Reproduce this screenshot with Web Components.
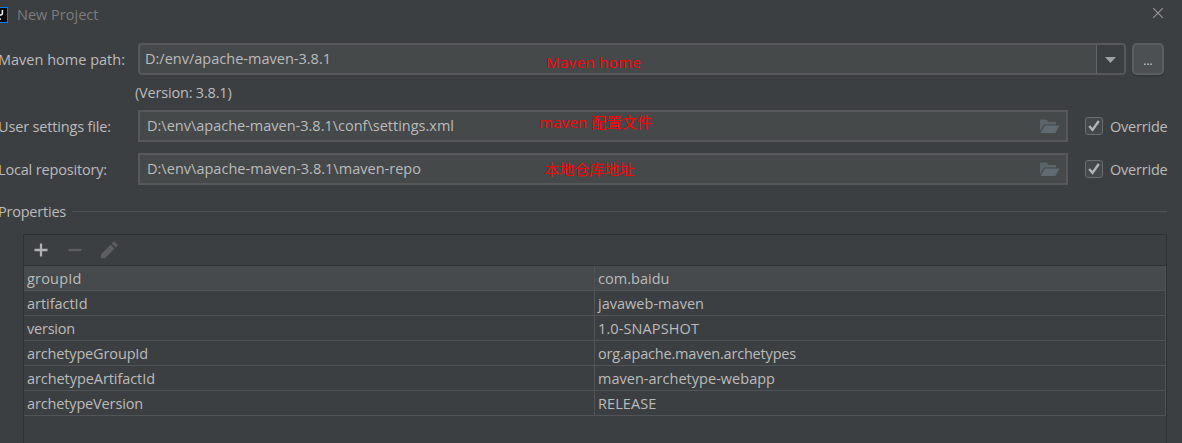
<!DOCTYPE html>
<html lang="en">
<head>
<meta charset="utf-8">
<title>New Project</title>
<style>
html,body{margin:0;height:100%;overflow:hidden;background:#3c3f41}
</style>
</head>
<body>
<new-project-dialog></new-project-dialog>
<script>
const define = (name, html, setup) => {
  const template = document.createElement('template');
  template.innerHTML = html;
  customElements.define(name, class extends HTMLElement {
    constructor() {
      super();
      this.attachShadow({mode: 'open'}).append(template.content.cloneNode(true));
    }
    connectedCallback() { if (setup) setup(this, this.shadowRoot); }
  });
};

/* One line of text whose tracking is adjusted to an advance width in px. */
define('fit-text', `<style>:host{display:inline-block;white-space:pre;flex:none}span{display:inline-block}</style><span><slot></slot></span>`, (el, root) => {
  const span = root.querySelector('span');
  const natural = span.getBoundingClientRect().width;
  const count = [...el.textContent].length;
  if (natural) span.style.letterSpacing = ((+el.getAttribute('w') - natural) / count) + 'px';
});

define('title-bar', `<style>
:host{display:flex;align-items:center;height:30px;color:#7b7d7f;box-sizing:border-box;padding-right:18px}
.logo{display:block;margin-right:9px}
.x{margin-left:auto;display:block;margin-top:-4px}
</style>
<svg class="logo" width="8" height="16" viewBox="0 0 8 16"><path fill="#087cfa" d="M0 0h8v16H0z"/><path fill="#08090b" d="M0 1h7v14H0z"/><path d="M2.4 3v3.600Q2.400 8 1 8H0" fill="none" stroke="#fff" stroke-width="1.500"/><path fill="#fff" d="M0 11.500h1v1.300H0z"/></svg>
<slot></slot>
<svg class="x" width="12" height="12" viewBox="0 0 12 12"><path d="M1.2 1.2l9.6 9.6M10.800 1.200L1.200 10.800" stroke="#96989a" stroke-width="1.1"/></svg>`);

define('form-row', `<style>
:host{display:grid;grid-template-columns:138px minmax(0,1fr) auto;height:32px;align-items:center}
.label{margin-left:-2px;padding-top:2px}
</style><div class="label"><slot name="label"></slot></div><slot></slot><slot name="end"></slot>`);

define('path-field', `<style>
:host{display:flex;position:relative;box-sizing:border-box;height:32px;border:2px solid #56585a;background:#45494a;align-items:center;padding:0 6px 0 7px}
:host([combo]){border-radius:4px;padding:0 0 0 5px}
.note{position:absolute;left:var(--note-x);top:var(--note-y);color:#f00;line-height:20px}
.end{margin-left:auto;display:flex}
</style><div class="text"><slot></slot></div><div class="note"><slot name="note"></slot></div><div class="end"><slot name="end"></slot></div>`);

define('combo-arrow', `<style>
:host{display:flex;width:27px;height:28px;background:#3c3f41;border-left:1px solid #646668;align-items:center;justify-content:center;border-radius:0 2px 2px 0}
</style><svg width="11" height="6" viewBox="0 0 11 6" style="margin-top:2px"><path d="M0 0h11L5.500 6z" fill="#9fa2a5"/></svg>`);

define('more-button', `<style>
:host{display:flex;box-sizing:border-box;width:32px;height:32px;margin-left:6px;border:2px solid #5b5f61;border-radius:5px;background:#4c5052;box-shadow:0 2px 0 #36393a;justify-content:center;align-items:center;color:#cfd0d1;font-size:12px}
span{padding-top:3px}
</style><span><slot></slot></span>`);

define('folder-icon', `<style>:host{display:block;height:15px}svg{display:block}</style>
<svg width="20" height="15" viewBox="0 0 20 15"><path d="M0 0.500h6.500L9 3h7v2.500H4.200L0 12z" fill="#5b6468"/><path d="M4.800 6.500H19.500L15.400 14H.5z" fill="#5f6b71"/></svg>`);

define('check-box', `<style>
:host{display:flex;align-items:center;width:82px;margin-left:17px}
.box{box-sizing:border-box;width:18px;height:18px;border:1px solid #6b6d6e;border-radius:3px;background:#43494a;flex:none;margin-right:7px}
svg{display:block}
.t{padding-top:2px}
</style><div class="box"><svg width="16" height="16" viewBox="0 0 16 16"><path d="M3.200 8L6.500 11.900L12.800 3" fill="none" stroke="#b3b4b5" stroke-width="2.400"/></svg></div><div class="t"><slot></slot></div>`);

define('section-title', `<style>
:host{display:flex;align-items:center;height:20px}
.t{width:74px;margin-left:-2px;padding-top:2px}
i{flex:1;height:1px;background:#515456}
</style><div class="t"><slot></slot></div><i></i>`);

define('table-toolbar', `<style>
:host{display:flex;height:30px;align-items:center;padding-left:9px;gap:16px;border-bottom:1px solid #2f3233}
svg{display:block}
</style>
<svg width="18" height="18" viewBox="0 0 18 18"><path d="M8 2.500v13M1.500 9h13" stroke="#afb1b3" stroke-width="2.300"/></svg>
<svg width="18" height="18" viewBox="0 0 18 18"><path d="M1.500 9h13" stroke="#5c5e60" stroke-width="2.200"/></svg>
<svg width="18" height="18" viewBox="0 0 18 18"><path d="M0 17.300v-4L9.500 3.800l4 4L4 17.300zM10.700 2.600L12.200 1q.8-.8 1.600 0l2.500 2.500q.8.8 0 1.600l-1.600 1.500z" fill="#5c5e60"/></svg>`);

define('property-row', `<style>
:host{display:grid;grid-template-columns:570px 1fr;height:25px;box-sizing:border-box;border-bottom:1px solid #515456;border-right:1px solid #515456}
:host([selected]){background:#464a4c}
div{display:flex;align-items:center;padding:2px 0 0 3px}
.v{border-left:1px solid #515456}
</style><div><slot name="key"></slot></div><div class="v"><slot></slot></div>`);

define('property-table', `<style>
:host{display:block;box-sizing:border-box;border:1px solid #2f3233;border-bottom:0;height:209px}
</style><table-toolbar></table-toolbar><slot></slot>`);

const row = (k, kw, v, vw, sel = '') =>
  `<property-row ${sel}><fit-text slot="key" w="${kw}">${k}</fit-text><fit-text w="${vw}">${v}</fit-text></property-row>`;

define('new-project-dialog', `<style>
:host{display:flex;flex-direction:column;height:443px;box-sizing:border-box;background:#3c3f41;color:#bbbbbb;font:14.500px/20px "Open Sans","Noto Sans CJK SC",sans-serif}
fit-text[slot=note]{font-size:15px}
form-row{margin-right:15px}
.first{margin-top:13px}
.first{margin-right:18px}
.version{height:20px;padding:8px 0 7px 135px}
.second{margin-top:11px}
section-title{margin:16px 15px 0 0}
property-table{margin:13px 15px 0 23px}
</style>
<title-bar><fit-text w="81.500">New Project</fit-text></title-bar>
<form-row class="first"><fit-text slot="label" w="127">Maven home path:</fit-text>
 <path-field combo style="--note-x:406px;--note-y:7px"><fit-text w="186">D:/env/apache-maven-3.8.1</fit-text><fit-text slot="note" w="95">Maven home</fit-text><combo-arrow slot="end"></combo-arrow></path-field>
 <more-button slot="end">...</more-button></form-row>
<div class="version"><fit-text w="96.500">(Version: 3.8.1)</fit-text></div>
<form-row><fit-text slot="label" w="113">User settings file:</fit-text>
 <path-field style="--note-x:399px;--note-y:0px"><fit-text w="307">D:\\env\\apache-maven-3.8.1\\conf\\settings.xml</fit-text><fit-text slot="note" w="113">maven 配置文件</fit-text><folder-icon slot="end"></folder-icon></path-field>
 <check-box slot="end"><fit-text w="57.500">Override</fit-text></check-box></form-row>
<form-row class="second"><fit-text slot="label" w="109">Local repository:</fit-text>
 <path-field style="--note-x:404px;--note-y:4px"><fit-text w="274">D:\\env\\apache-maven-3.8.1\\maven-repo</fit-text><fit-text slot="note" w="90">本地仓库地址</fit-text><folder-icon slot="end"></folder-icon></path-field>
 <check-box slot="end"><fit-text w="57.500">Override</fit-text></check-box></form-row>
<section-title><fit-text w="68">Properties</fit-text></section-title>
<property-table>
${row('groupId', 54.5, 'com.baidu', 71.5, 'selected')}
${row('artifactId', 60.5, 'javaweb-maven', 106)}
${row('version', 48, '1.0-SNAPSHOT', 101)}
${row('archetypeGroupId', 121, 'org.apache.maven.archetypes', 198)}
${row('archetypeArtifactId', 128, 'maven-archetype-webapp', 177)}
${row('archetypeVersion', 116, 'RELEASE', 58.5)}
</property-table>`);
</script>
</body>
</html>
